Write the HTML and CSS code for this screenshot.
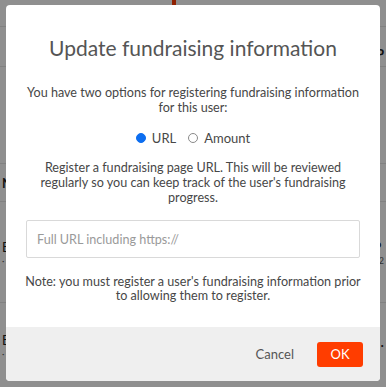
FILE: index.html
```html
<!DOCTYPE html>
<html>
<head>
<meta charset="utf-8">
<link rel="stylesheet" href="styles.css">
</head>
<body>
<div class="page">
  <div class="row r1"><span class="cell"></span></div>
  <div class="row r2"><span class="cell"></span><span class="cell right"><b>P</b></span></div>
  <div class="row r3"></div>
  <div class="row r4"><span class="cell"><b>N</b></span></div>
  <div class="row r5"><span class="cell">E<small>·</small></span><span class="cell right">P<small>02</small></span></div>
  <div class="row r6"><span class="cell">E<small>·</small></span><span class="cell right">·</span></div>
  <div class="marker"></div>
</div>
<div class="overlay"></div>
<div class="modal">
  <div class="modal-body">
    <h1 class="title">Update fundraising information</h1>
    <p class="text intro">You have two options for registering fundraising information for this user:</p>
    <div class="options">
      <label class="option"><span class="radio checked"></span>URL</label>
      <label class="option"><span class="radio"></span>Amount</label>
    </div>
    <p class="text desc">Register a fundraising page URL. This will be reviewed regularly so you can keep track of the user's fundraising progress.</p>
    <div class="field"><span class="placeholder">Full URL including https://</span></div>
    <p class="text note">Note: you must register a user's fundraising information prior to allowing them to register.</p>
  </div>
  <div class="modal-footer">
    <button class="btn cancel">Cancel</button>
    <button class="btn ok">OK</button>
  </div>
</div>
</body>
</html>
```

FILE: styles.css
```css
html, body {
  margin: 0;
  padding: 0;
}
body {
  width: 386px;
  height: 387px;
  overflow: hidden;
  position: relative;
  background: #ffffff;
  font-family: "Lato", "Liberation Sans", sans-serif;
}
.page {
  display: flex;
  flex-direction: column;
}
.row {
  display: flex;
  justify-content: space-between;
  align-items: center;
  border-bottom: 1px solid #e6e6e6;
  padding: 0 2px;
  font-size: 13px;
  color: #222;
}
.r1 { height: 26px; }
.r2 { height: 40px; align-items: flex-end; padding-bottom: 4px; box-sizing: border-box; }
.r3 { height: 96px; }
.r4 { height: 37px; }
.r5 { height: 100px; }
.r6 { height: 84px; border-bottom: 0; }
.cell small {
  display: block;
  font-size: 9px;
  color: #555;
}
.marker {
  position: absolute;
  left: 172px;
  top: 0;
  width: 4px;
  height: 8px;
  background: #ff3a00;
}
.overlay {
  position: absolute;
  inset: 0;
  background: rgba(0, 0, 0, 0.44);
}
.modal {
  position: absolute;
  left: 6px;
  top: 5px;
  width: 374px;
  height: 376px;
  background: #fff;
  border-radius: 4px;
  overflow: hidden;
  display: flex;
  flex-direction: column;
}
.modal-body {
  flex: 1;
  padding: 30px 20px 0 20px;
  text-align: center;
  color: #474747;
}
.title {
  margin: 0;
  font-size: 21px;
  line-height: 26px;
  font-weight: 400;
  color: #555;
}
.text {
  margin: 0;
  font-size: 12.6px;
  line-height: 15px;
}
.intro { margin-top: 24px; }
.options {
  margin-top: 15px;
  height: 16px;
  display: flex;
  justify-content: center;
  gap: 12px;
  font-size: 13px;
  line-height: 16px;
}
.option {
  display: flex;
  align-items: center;
  gap: 6px;
}
.radio {
  width: 10px;
  height: 10px;
  border-radius: 50%;
  border: 1px solid #8a8a8a;
  box-sizing: border-box;
}
.radio.checked {
  background: #0d6ef0;
  border-color: #0d6ef0;
}
.desc { margin-top: 14px; padding: 0 10px; }
.field {
  margin-top: 15px;
  height: 38px;
  box-sizing: border-box;
  border: 1px solid #d9d9d9;
  border-radius: 2px;
  display: flex;
  align-items: center;
  padding: 0 10px;
  text-align: left;
}
.placeholder {
  font-size: 12.6px;
  color: #9a9a9a;
}
.note { margin: 17px -6px 0; line-height: 14px; }
.modal-footer {
  height: 54px;
  background: #efefef;
  display: flex;
  align-items: center;
  justify-content: flex-end;
  padding: 0 17px 0 0;
  gap: 23px;
}
.btn {
  font-family: inherit;
  font-size: 13px;
  border: 0;
  cursor: pointer;
}
.cancel {
  background: none;
  color: #555;
  padding: 0;
}
.ok {
  width: 46px;
  height: 25px;
  border-radius: 3px;
  background: #ff3d00;
  color: #fff;
  padding: 0;
}
```
